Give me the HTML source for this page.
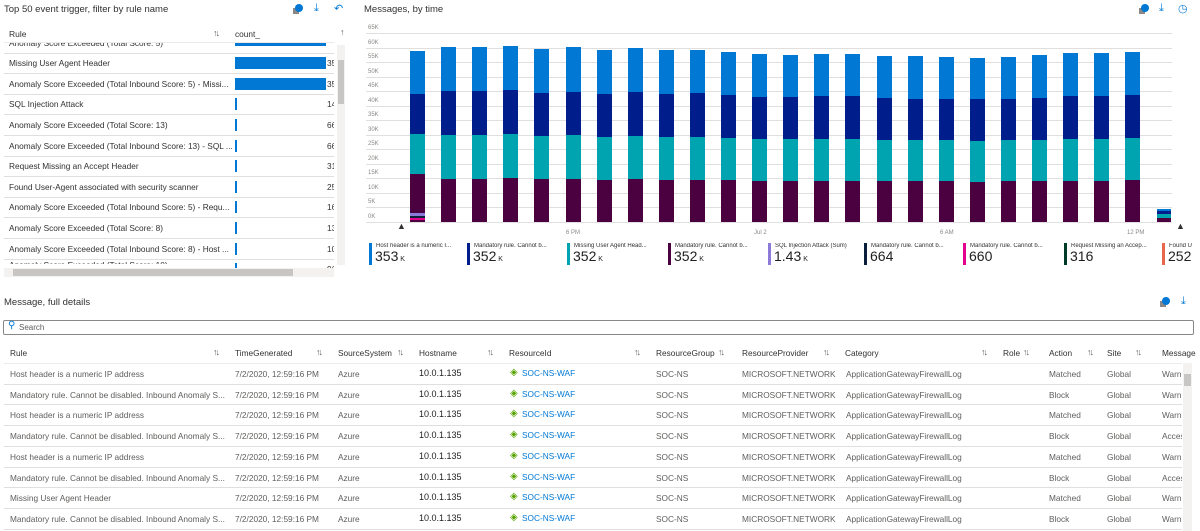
<!DOCTYPE html>
<html><head><meta charset="utf-8">
<style>
*{margin:0;padding:0;box-sizing:border-box}
body{width:1200px;height:531px;background:#fff;font-family:"Liberation Sans",sans-serif;font-size:8.3px;color:#323130;position:relative;overflow:hidden}
.a{position:absolute;white-space:nowrap}
.t{font-size:9.5px;color:#323130}
.hl{position:absolute;height:1px;background:#e1dfdd}
.ic{position:absolute;color:#0078d4;font-size:11px}
.srt{position:absolute;font-size:9px;color:#605e5c;letter-spacing:-2px}
.gl{position:absolute;left:366px;width:806px;height:1px;background:#e1dfdd}
.yl{position:absolute;left:368px;font-size:6px;color:#8a8886}
.bar{position:absolute;width:15px}
.lg{position:absolute;top:243px;height:22px;border-left:3px solid}
.lg span{display:block;font-size:6px;color:#323130;padding-left:4px;width:90px;overflow:hidden}
.lg b{display:block;font-weight:normal;font-size:14px;padding-left:3px;line-height:15px;color:#201f1e}
.lg b i{font-style:normal;font-size:7px}
</style></head><body>

<!-- Left panel -->
<div class="a t" style="left:4px;top:4px">Top 50 event trigger, filter by rule name</div>
<svg class="a" style="left:293px;top:4px" width="10" height="11"><rect x="0" y="4" width="6" height="6" fill="#8a8886"/><circle cx="6" cy="4" r="4" fill="#0078d4"/></svg>
<div class="ic" style="left:314px;top:2px">⤓</div>
<div class="ic" style="left:334px;top:2px">↶</div>
<div class="a" style="left:9px;top:29px;font-size:8.5px">Rule</div>
<div class="srt" style="left:213px;top:28px">↑↓</div>
<div class="a" style="left:235px;top:29px">count_</div>
<div class="a" style="left:340px;top:27px;font-size:9px;color:#605e5c">↑</div>
<div class="hl" style="left:4px;top:42px;width:330px;background:#edebe9"></div>
<div class="a" style="left:0;top:43px;width:334px;height:8px;overflow:hidden"><div class="a" style="left:9px;top:-5px">Anomaly Score Exceeded (Total Score: 5)</div></div>
<div id="lt"></div>
<div class="a" style="left:337px;top:45px;width:8px;height:220px;background:#f3f2f1"></div>
<div class="a" style="left:338px;top:60px;width:6px;height:44px;background:#c8c6c4"></div>
<div class="a" style="left:4px;top:268px;width:330px;height:9px;background:#f3f2f1"></div>
<div class="a" style="left:13px;top:269px;width:280px;height:7px;background:#c8c6c4"></div>

<!-- Chart -->
<div class="a t" style="left:364px;top:4px">Messages, by time</div>
<svg class="a" style="left:1139px;top:4px" width="10" height="11"><rect x="0" y="4" width="6" height="6" fill="#8a8886"/><circle cx="6" cy="4" r="4" fill="#0078d4"/></svg>
<div class="ic" style="left:1159px;top:2px">⤓</div>
<div class="ic" style="left:1178px;top:2px">◷</div>
<div id="ch"></div>
<div class="a" style="left:397px;top:221px;font-size:9px;color:#323130">▲</div>
<div class="a" style="left:1176px;top:221px;font-size:9px;color:#323130">▲</div>
<div class="a" style="left:566px;top:230px;font-size:6px;color:#8a8886">6 PM</div>
<div class="a" style="left:754px;top:230px;font-size:6px;color:#8a8886">Jul 2</div>
<div class="a" style="left:940px;top:230px;font-size:6px;color:#8a8886">6 AM</div>
<div class="a" style="left:1127px;top:230px;font-size:6px;color:#8a8886">12 PM</div>

<div class="lg" style="left:369px;border-color:#0078d4"><span>Host header is a numeric I...</span><b>353<i> K</i></b></div>
<div class="lg" style="left:467px;border-color:#001d8c"><span>Mandatory rule. Cannot b...</span><b>352<i> K</i></b></div>
<div class="lg" style="left:567px;border-color:#00a4b0"><span>Missing User Agent Head...</span><b>352<i> K</i></b></div>
<div class="lg" style="left:668px;border-color:#4b003f"><span>Mandatory rule. Cannot b...</span><b>352<i> K</i></b></div>
<div class="lg" style="left:768px;border-color:#8c7ad8"><span>SQL Injection Attack (Sum)</span><b>1.43<i> K</i></b></div>
<div class="lg" style="left:864px;border-color:#0a1f3c"><span>Mandatory rule. Cannot b...</span><b>664</b></div>
<div class="lg" style="left:963px;border-color:#e3008c"><span>Mandatory rule. Cannot b...</span><b>660</b></div>
<div class="lg" style="left:1064px;border-color:#003b2a"><span>Request Missing an Accep...</span><b>316</b></div>
<div class="lg" style="left:1162px;border-color:#e8664c"><span style="width:36px">Found U</span><b>252</b></div>

<!-- Bottom -->
<div class="a t" style="left:4px;top:297px">Message, full details</div>
<svg class="a" style="left:1160px;top:297px" width="10" height="11"><rect x="0" y="4" width="6" height="6" fill="#8a8886"/><circle cx="6" cy="4" r="4" fill="#0078d4"/></svg>
<div class="ic" style="left:1181px;top:295px">⤓</div>
<div class="a" style="left:3px;top:320px;width:1191px;height:15px;border:1px solid #8a8886;border-radius:2px"></div>
<div class="a" style="left:8px;top:320px;font-size:10px;color:#0078d4">⚲</div>
<div class="a" style="left:19px;top:323px;font-size:8px;color:#605e5c">Search</div>
<div id="bt"></div>
<div class="a" style="left:1183px;top:363px;width:9px;height:168px;background:#f3f2f1"></div>
<div class="a" style="left:1184px;top:374px;width:7px;height:12px;background:#c8c6c4"></div>

<script>
var L=[["Anomaly Score Exceeded (Total Score: 5)",91,"35"],["Missing User Agent Header",91,"35"],["Anomaly Score Exceeded (Total Inbound Score: 5) - Missi...",91,"35"],["SQL Injection Attack",2,"14"],["Anomaly Score Exceeded (Total Score: 13)",2,"66"],["Anomaly Score Exceeded (Total Inbound Score: 13) - SQL ...",2,"66"],["Request Missing an Accept Header",2,"31"],["Found User-Agent associated with security scanner",2,"25"],["Anomaly Score Exceeded (Total Inbound Score: 5) - Requ...",2,"16"],["Anomaly Score Exceeded (Total Score: 8)",2,"13"],["Anomaly Score Exceeded (Total Inbound Score: 8) - Host ...",2,"10"],["Anomaly Score Exceeded (Total Score: 10)",2,"96"]];
var h="";
for(var i=0;i<L.length;i++){var y=32.5+i*20.6;
 if(i==0){h+='<div class="a" style="left:235px;top:43px;width:91px;height:3px;background:#0078d4"></div>';}
 else{var cl=i==11?"top:"+(y+1)+"px;height:4px;overflow:hidden":"top:"+(y+5)+"px";
 h+='<div class="a" style="left:9px;'+cl+'">'+L[i][0]+'</div>';
 h+='<div class="a" style="left:235px;top:'+(y+4)+'px;width:'+L[i][1]+'px;height:'+(i==11?5:12)+'px;background:#0078d4"></div>';
 h+='<div class="a" style="left:327px;top:'+(y+5)+'px;width:7px;overflow:hidden">'+L[i][2]+'</div>';}
 if(i<11)h+='<div class="hl" style="left:4px;top:'+(y+20)+'px;width:330px"></div>';}
document.getElementById("lt").innerHTML=h;
var c="";var lb=["65K","60K","55K","50K","45K","40K","35K","30K","25K","20K","15K","10K","5K","0K"];
for(var k=0;k<14;k++){var gy=33.3+k*14.5;c+='<div class="gl" style="top:'+gy+'px"></div><div class="yl" style="top:'+(gy-8)+'px">'+lb[k]+'</div>';}
var T=[152,140,140,137,146,142,149,145,151,149,155,163,164,161,161,168,169,172,173,172,166,160,160,157],
N=[282,273,273,271,278,275,282,277,282,280,285,291,292,289,289,295,296,297,298,297,293,289,289,286],
E=[402,405,405,403,408,406,411,408,412,410,413,417,418,416,416,419,420,421,422,421,419,416,416,414],
P=[521,537,537,534,538,538,540,538,540,540,541,543,543,542,542,543,543,543,545,543,543,542,542,541];
function f(z){return 30+(z-90)/3;}
for(var i=0;i<24;i++){var x=410+i*31.1;
 var s=[[T[i],N[i],"#0078d4"],[N[i],E[i],"#001d8c"],[E[i],P[i],"#00a4b0"],[P[i],666,"#4b003f"]];
 for(var j=0;j<4;j++){var y1=f(s[j][0]),y2=f(s[j][1]);c+='<div class="bar" style="left:'+x+'px;top:'+y1+'px;height:'+(y2-y1)+'px;background:'+s[j][2]+'"></div>';}}
c+='<div class="bar" style="left:410px;top:213px;height:3px;background:#8c7ad8"></div><div class="bar" style="left:410px;top:216px;height:2px;background:#0a1f3c"></div><div class="bar" style="left:410px;top:218px;height:2px;background:#e3008c"></div>';
var sb=[[208.7,211,"#0078d4"],[211,214,"#001d8c"],[214,218,"#00a4b0"],[218,222,"#4b003f"]];
for(var j=0;j<4;j++)c+='<div class="bar" style="left:1157px;width:14px;top:'+sb[j][0]+'px;height:'+(sb[j][1]-sb[j][0])+'px;background:'+sb[j][2]+'"></div>';
document.getElementById("ch").innerHTML=c;
var H=[["Rule",10,213],["TimeGenerated",235,316],["SourceSystem",338,397],["Hostname",419,487],["ResourceId",509,634],["ResourceGroup",656,718],["ResourceProvider",742,823],["Category",845,981],["Role",1003,1023],["Action",1049,1087],["Site",1107,1135],["Message",1162,null]];
var b="";
for(var k=0;k<H.length;k++){b+='<div class="a" style="left:'+H[k][1]+'px;top:348px">'+H[k][0]+'</div>';if(H[k][2])b+='<div class="srt" style="left:'+H[k][2]+'px;top:347px">↑↓</div>';}
b+='<div class="hl" style="left:4px;top:363px;width:1178px;background:#edebe9"></div>';
var R=["Host header is a numeric IP address","Mandatory rule. Cannot be disabled. Inbound Anomaly S..."];
var rr=[[0,"Matched","Warni"],[1,"Block","Warni"],[0,"Matched","Warni"],[1,"Block","Acces"],[0,"Matched","Warni"],[1,"Block","Acces"],[2,"Matched","Warni"],[1,"Block","Warni"]];
for(var i=0;i<8;i++){var y=363+i*20.7,ty=y+6;
 var rule=rr[i][0]==2?"Missing User Agent Header":R[rr[i][0]];
 b+='<div class="a" style="left:10px;top:'+ty+'px;color:#605e5c">'+rule+'</div>';
 b+='<div class="a" style="left:235px;top:'+ty+'px;color:#605e5c">7/2/2020, 12:59:16 PM</div>';
 b+='<div class="a" style="left:338px;top:'+ty+'px;color:#605e5c">Azure</div>';
 b+='<div class="a" style="left:419px;top:'+(ty-1)+'px;color:#201f1e;font-size:9px">10.0.1.135</div>';
 b+='<div class="a" style="left:510px;top:'+(ty-2)+'px;color:#57a300;font-size:10px">◈</div><div class="a" style="left:522px;top:'+(ty-1)+'px;color:#0078d4">SOC-NS-WAF</div>';
 b+='<div class="a" style="left:656px;top:'+ty+'px;color:#605e5c">SOC-NS</div>';
 b+='<div class="a" style="left:742px;top:'+ty+'px;color:#605e5c">MICROSOFT.NETWORK</div>';
 b+='<div class="a" style="left:846px;top:'+ty+'px;color:#605e5c">ApplicationGatewayFirewallLog</div>';
 b+='<div class="a" style="left:1049px;top:'+ty+'px;color:#605e5c">'+rr[i][1]+'</div>';
 b+='<div class="a" style="left:1107px;top:'+ty+'px;color:#605e5c">Global</div>';
 b+='<div class="a" style="left:1162px;top:'+ty+'px;color:#605e5c;width:20px;overflow:hidden">'+rr[i][2]+'</div>';
 b+='<div class="hl" style="left:4px;top:'+(y+20.7)+'px;width:1178px"></div>';}
document.getElementById("bt").innerHTML=b;
</script>
</body></html>
